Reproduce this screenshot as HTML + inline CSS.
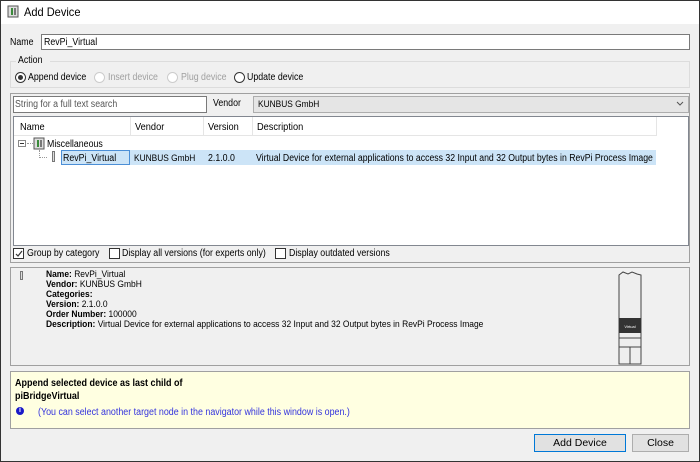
<!DOCTYPE html>
<html><head><meta charset="utf-8"><style>
*{box-sizing:border-box;margin:0;padding:0}
body{width:700px;height:462px;overflow:hidden;background:#f0f0f0;font-family:"Liberation Sans",sans-serif;font-size:10px;color:#000;position:relative}
.a{position:absolute;white-space:nowrap;transform-origin:0 0}
.frame{position:absolute;left:0;top:0;width:700px;height:462px;border:1px solid #333;pointer-events:none}
.radio{position:absolute;width:11px;height:11px;border:1px solid #333;border-radius:50%;background:#fff}
.radio.d{border-color:#ccc}
.cb{position:absolute;width:11px;height:11px;border:1px solid #333;background:#fff}
.gray{color:#a0a0a0}
.s{transform:scaleX(.88)}
.btn{position:absolute;height:18px;border:1px solid #adadad;background:#e1e1e1;text-align:center;line-height:16px;font-size:10.5px}
</style></head><body>
<div class="a" style="left:0;top:0;width:700px;height:24px;background:#fff"></div>
<svg class="a" style="left:7px;top:5px" width="12" height="13"><rect x="1" y="1" width="10" height="11" fill="#ddd" stroke="#555"/><rect x="4" y="3" width="2" height="7" fill="#3a8a3a"/><rect x="7" y="3" width="2" height="7" fill="#777"/></svg>
<div class="a" style="left:24px;top:5px;font-size:12px;transform:scaleX(.92)">Add Device</div>

<div class="a s" style="left:10px;top:37px">Name</div>
<div class="a" style="left:41px;top:34px;width:649px;height:16px;background:#fff;border:1px solid #7a7a7a"></div>
<div class="a s" style="left:44px;top:37px">RevPi_Virtual</div>

<div class="a" style="left:10px;top:61px;width:680px;height:27px;border:1px solid #dcdcdc"></div>
<div class="a" style="left:16px;top:55px;width:34px;height:12px;background:#f0f0f0"></div>
<div class="a s" style="left:18px;top:55px">Action</div>
<div class="radio" style="left:15px;top:72px"></div><div class="a" style="left:18px;top:75px;width:5px;height:5px;border-radius:50%;background:#333"></div>
<div class="a s" style="left:28px;top:72px">Append device</div>
<div class="radio d" style="left:94px;top:72px"></div><div class="a gray s" style="left:108px;top:72px">Insert device</div>
<div class="radio d" style="left:167px;top:72px"></div><div class="a gray s" style="left:181px;top:72px">Plug device</div>
<div class="radio" style="left:234px;top:72px"></div><div class="a s" style="left:247px;top:72px">Update device</div>

<div class="a" style="left:10px;top:93px;width:680px;height:170px;border:1px solid #a0a0a0"></div>
<div class="a" style="left:13px;top:96px;width:194px;height:17px;background:#fff;border:1px solid #7a7a7a"></div>
<div class="a s" style="left:15px;top:99px;color:#555">String for a full text search</div>
<div class="a s" style="left:213px;top:98px">Vendor</div>
<div class="a" style="left:253px;top:96px;width:436px;height:17px;background:#e5e5e5;border:1px solid #adadad"></div>
<div class="a s" style="left:258px;top:99px;font-size:9.5px">KUNBUS GmbH</div>
<svg class="a" style="left:676px;top:101px" width="8" height="6"><path d="M1 1 L4 4 L7 1" fill="none" stroke="#555"/></svg>

<div class="a" style="left:13px;top:116px;width:676px;height:130px;background:#fff;border:1px solid #828790"></div>
<div class="a" style="left:14px;top:117px;width:642px;height:19px;border-bottom:1px solid #e5e5e5"></div>
<div class="a" style="left:130px;top:117px;width:1px;height:19px;background:#e5e5e5"></div>
<div class="a" style="left:203px;top:117px;width:1px;height:19px;background:#e5e5e5"></div>
<div class="a" style="left:252px;top:117px;width:1px;height:19px;background:#e5e5e5"></div>
<div class="a" style="left:656px;top:117px;width:1px;height:19px;background:#e5e5e5"></div>
<div class="a s" style="left:20px;top:121px;font-size:10.5px">Name</div>
<div class="a s" style="left:135px;top:121px;font-size:10.5px">Vendor</div>
<div class="a s" style="left:208px;top:121px;font-size:10.5px">Version</div>
<div class="a s" style="left:257px;top:121px;font-size:10.5px">Description</div>
<div class="a" style="left:18px;top:140px;width:8px;height:7px;border:1px solid #888;background:#fff"></div><div class="a" style="left:20px;top:143px;width:4px;height:1px;background:#333"></div>
<div class="a" style="left:27px;top:143px;width:6px;border-top:1px dotted #999"></div>
<svg class="a" style="left:33px;top:137px" width="12" height="13"><rect x="1" y="1" width="10" height="11" fill="#ddd" stroke="#555"/><rect x="4" y="3" width="2" height="7" fill="#3a8a3a"/><rect x="7" y="3" width="2" height="7" fill="#777"/></svg>
<div class="a s" style="left:47px;top:139px">Miscellaneous</div>
<div class="a" style="left:39px;top:150px;width:8px;height:8px;border-left:1px dotted #999;border-bottom:1px dotted #999"></div>
<div class="a" style="left:130px;top:150px;width:526px;height:15px;background:#cce4f7"></div>
<div class="a" style="left:52px;top:151px;width:3px;height:11px;background:#ddd;border:1px solid #777"></div>
<div class="a" style="left:61px;top:150px;width:69px;height:15px;background:#cce4f7;border:1px solid #4c8fd6"></div>
<div class="a s" style="left:63px;top:153px">RevPi_Virtual</div>
<div class="a s" style="left:134px;top:153px;font-size:9.5px">KUNBUS GmbH</div>
<div class="a s" style="left:208px;top:153px">2.1.0.0</div>
<div class="a" style="left:256px;top:153px;font-size:10px;transform:scaleX(.87)">Virtual Device for external applications to access 32 Input and 32 Output bytes in RevPi Process Image</div>

<div class="cb" style="left:13px;top:248px"></div>
<svg class="a" style="left:14px;top:249px" width="10" height="10"><path d="M2 5 L4 7 L8 2" fill="none" stroke="#333" stroke-width="1.2"/></svg>
<div class="a s" style="left:27px;top:248px">Group by category</div>
<div class="cb" style="left:109px;top:248px"></div><div class="a s" style="left:122px;top:248px">Display all versions (for experts only)</div>
<div class="cb" style="left:275px;top:248px"></div><div class="a s" style="left:289px;top:248px">Display outdated versions</div>

<div class="a" style="left:10px;top:267px;width:680px;height:99px;border:1px solid #a0a0a0"></div>
<div class="a" style="left:20px;top:271px;width:3px;height:9px;background:#ddd;border:1px solid #777"></div>
<div class="a" style="left:46px;top:270px;line-height:10px;font-size:9.5px;transform:scaleX(.89)">
<b>Name:</b> RevPi_Virtual<br><b>Vendor:</b> KUNBUS GmbH<br><b>Categories:</b><br><b>Version:</b> 2.1.0.0<br><b>Order Number:</b> 100000<br><b>Description:</b> Virtual Device for external applications to access 32 Input and 32 Output bytes in RevPi Process Image</div>
<svg class="a" style="left:618px;top:271px" width="24" height="94"><path d="M1 4 L5 1 L10 3 L14 1 L19 3 L23 4 L23 93 L1 93 Z" fill="#eee" stroke="#444"/><rect x="1" y="47" width="22" height="15" fill="#333"/><text x="12" y="57" font-size="4" fill="#fff" text-anchor="middle" font-family="Liberation Sans">Virtual</text><path d="M1 67 H23 M1 76 H23 M12 76 V93" stroke="#444" fill="none"/></svg>

<div class="a" style="left:10px;top:371px;width:680px;height:58px;background:#ffffe1;border:1px solid #a0a0a0"></div>
<div class="a" style="left:15px;top:377px;font-weight:bold;line-height:13px;font-size:10px;transform:scaleX(.9)">Append selected device as last child of<br>piBridgeVirtual</div>
<div class="a" style="left:16px;top:407px;width:8px;height:8px;border-radius:50%;background:#1a1ac8;color:#fff;font-size:7px;font-weight:bold;text-align:center;line-height:8px">i</div>
<div class="a" style="left:38px;top:407px;color:#3333dd;font-size:10px;transform:scaleX(.89)">(You can select another target node in the navigator while this window is open.)</div>

<div class="btn" style="left:534px;top:434px;width:92px;border-color:#0078d7">Add Device</div>
<div class="btn" style="left:632px;top:434px;width:57px">Close</div>
<div class="frame"></div>
</body></html>
